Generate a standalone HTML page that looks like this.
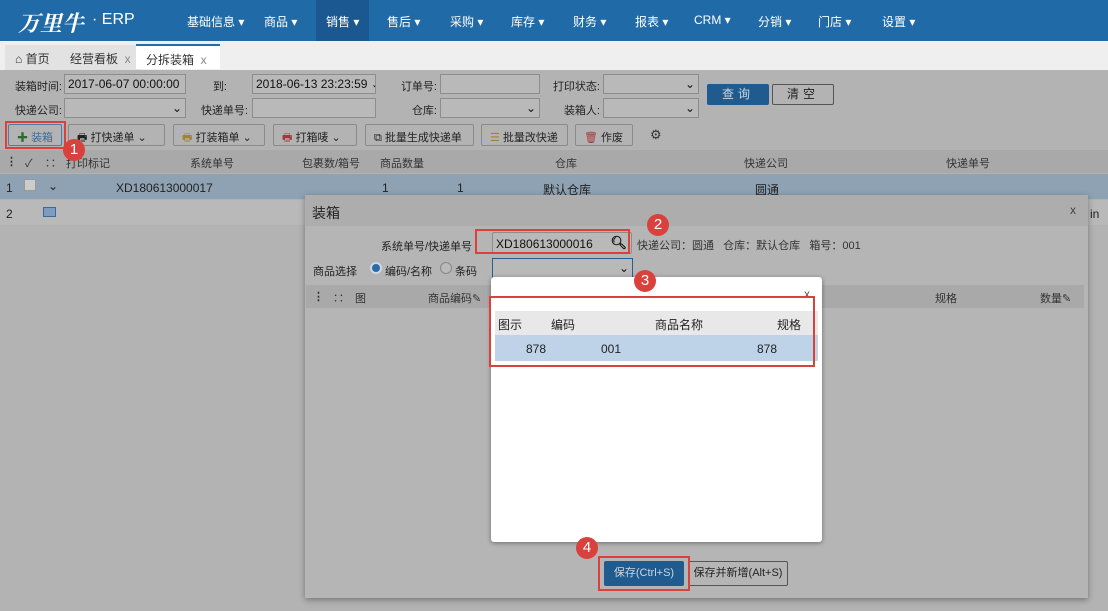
<!DOCTYPE html>
<html><head><meta charset="utf-8"><style>
*{box-sizing:border-box;margin:0;padding:0}
body{width:1108px;height:611px;overflow:hidden;position:relative;background:#b3b3b3;font-family:"Liberation Sans","Noto Sans CJK SC",sans-serif;font-size:12px;color:#222}
.a{position:absolute}
.nav{left:0;top:0;width:1108px;height:41px;background:#216aa8;color:#fff}
.nav span{position:absolute;top:13px;font-size:12px}
.tabs{left:0;top:41px;width:1108px;height:29px;background:#efefef}
.tab{top:4px;height:25px;padding:5px 10px;font-size:12px;color:#333;background:#e2e2e2}
.inp{background:#b9b9b9;border:1px solid #8d8d8d;height:20px;font-size:12px;padding:2px 3px;color:#111;white-space:nowrap;overflow:hidden}
.lbl{font-size:11px;color:#222;text-align:right;width:80px;white-space:nowrap}
.btn{top:124px;height:22px;border:1px solid #8a8a8a;border-radius:2px;font-size:11px;padding:4px 8px;color:#222;white-space:nowrap}
.hdr{top:150px;left:0;width:1108px;height:23px;background:#a9a9a9}
.th{top:155px;font-size:11px;color:#333}
.badge{width:22px;height:22px;border-radius:50%;background:#d9413d;color:#fff;font-size:15px;text-align:center;line-height:22px;z-index:5}
.red{border:2px solid #d9413d;z-index:4}
</style></head><body>
<div class="a nav">
 <div class="a" style="left:18px;top:7px;font:italic bold 22px 'Liberation Serif','Noto Serif CJK SC',serif;color:#fff">万里牛</div>
 <div class="a" style="left:92px;top:11px;font-size:16px">· ERP</div>
 <div class="a" style="left:316px;top:0;width:53px;height:41px;background:#1b5790"></div>
 <span style="left:187px">基础信息 ▾</span><span style="left:264px">商品 ▾</span><span style="left:326px">销售 ▾</span><span style="left:387px">售后 ▾</span><span style="left:450px">采购 ▾</span><span style="left:511px">库存 ▾</span><span style="left:573px">财务 ▾</span><span style="left:635px">报表 ▾</span><span style="left:694px">CRM ▾</span><span style="left:758px">分销 ▾</span><span style="left:818px">门店 ▾</span><span style="left:882px">设置 ▾</span>
</div>
<div class="a tabs"></div>
<div class="a tab" style="left:5px;top:45px">⌂ 首页</div>
<div class="a tab" style="left:60px;top:45px">经营看板 &nbsp;<span style="color:#888">x</span></div>
<div class="a tab" style="left:136px;top:44px;background:#fff;border-top:2px solid #2a6aa8;width:84px">分拆装箱 &nbsp;<span style="color:#888">x</span></div>

<div class="a lbl" style="left:-18px;top:78px">装箱时间:</div>
<div class="a inp" style="left:64px;top:74px;width:122px">2017-06-07 00:00:00 ⌄</div>
<div class="a lbl" style="left:147px;top:78px">到:</div>
<div class="a inp" style="left:252px;top:74px;width:124px">2018-06-13 23:23:59 ⌄</div>
<div class="a lbl" style="left:357px;top:78px">订单号:</div>
<div class="a inp" style="left:440px;top:74px;width:100px"></div>
<div class="a lbl" style="left:520px;top:78px">打印状态:</div>
<div class="a inp" style="left:603px;top:74px;width:96px;text-align:right">⌄</div>
<div class="a lbl" style="left:-18px;top:102px">快递公司:</div>
<div class="a inp" style="left:64px;top:98px;width:122px;text-align:right">⌄</div>
<div class="a lbl" style="left:168px;top:102px">快递单号:</div>
<div class="a inp" style="left:252px;top:98px;width:124px"></div>
<div class="a lbl" style="left:357px;top:102px">仓库:</div>
<div class="a inp" style="left:440px;top:98px;width:100px;text-align:right">⌄</div>
<div class="a lbl" style="left:520px;top:102px">装箱人:</div>
<div class="a inp" style="left:603px;top:98px;width:96px;text-align:right">⌄</div>
<div class="a" style="left:707px;top:84px;width:62px;height:21px;background:#1f5b8e;color:#c9d6e3;text-align:center;line-height:20px;border-radius:2px;letter-spacing:4px">查询</div>
<div class="a" style="left:772px;top:84px;width:62px;height:21px;border:1px solid #555;text-align:center;line-height:19px;border-radius:2px;letter-spacing:4px">清空</div>

<div class="a red" style="left:5px;top:121px;width:61px;height:28px"></div>
<div class="a btn" style="left:8px;border-color:#4d7ea8"><b style="color:#2c6a35">✚</b> <span style="color:#3d6b98">装箱</span></div>
<div class="a btn" style="left:68px;width:97px">🖶 打快递单 ⌄</div>
<div class="a btn" style="left:173px;width:92px"><span style="color:#a08431">🖶</span> 打装箱单 ⌄</div>
<div class="a btn" style="left:273px;width:84px"><span style="color:#a23a3a">🖶</span> 打箱唛 ⌄</div>
<div class="a btn" style="left:365px;width:109px">⧉ 批量生成快递单</div>
<div class="a btn" style="left:481px;width:87px"><span style="color:#a08431">☰</span> 批量改快递</div>
<div class="a btn" style="left:575px;width:58px"><span style="color:#a23a3a">🗑</span> 作废</div>
<div class="a" style="left:650px;top:127px;font-size:13px;color:#333">⚙</div>
<div class="a badge" style="left:63px;top:139px">1</div>

<div class="a hdr"></div>
<div class="a th" style="left:6px"><b>⋮</b></div><div class="a th" style="left:25px">✓</div><div class="a th" style="left:45px">∷</div>
<div class="a th" style="left:66px">打印标记</div><div class="a th" style="left:190px">系统单号</div><div class="a th" style="left:302px">包裹数/箱号</div><div class="a th" style="left:380px">商品数量</div><div class="a th" style="left:555px">仓库</div><div class="a th" style="left:744px">快递公司</div><div class="a th" style="left:946px">快递单号</div>
<div class="a" style="left:0;top:174px;width:1108px;height:25px;background:#8ea2b3"></div>
<div class="a" style="left:6px;top:181px">1</div><div class="a" style="left:24px;top:179px;width:12px;height:12px;background:#ccc;border:1px solid #999"></div><div class="a" style="left:48px;top:179px">⌄</div>
<div class="a" style="left:116px;top:181px">XD180613000017</div><div class="a" style="left:382px;top:181px">1</div><div class="a" style="left:457px;top:181px">1</div><div class="a" style="left:543px;top:181px">默认仓库</div><div class="a" style="left:755px;top:181px">圆通</div>
<div class="a" style="left:0;top:200px;width:1108px;height:25px;background:#b9b9b9"></div>
<div class="a" style="left:6px;top:207px">2</div><div class="a" style="left:43px;top:207px;width:13px;height:10px;border:1px solid #3a6a9a;background:#7d9cc0"></div>
<div class="a" style="left:1090px;top:207px">in</div>

<div class="a" style="left:305px;top:195px;width:783px;height:403px;background:#b5b5b5;box-shadow:0 2px 6px rgba(0,0,0,.35)"></div>
<div class="a" style="left:305px;top:195px;width:783px;height:31px;background:#adadad"></div>
<div class="a" style="left:312px;top:203px;font-size:14px">装箱</div>
<div class="a" style="left:1070px;top:203px;color:#444">x</div>
<div class="a" style="left:381px;top:238px;font-size:11px">系统单号/快递单号</div>
<div class="a inp" style="left:492px;top:232px;width:140px;height:22px;padding-top:4px;border-radius:2px">XD180613000016<b style="position:absolute;right:4px;top:2px;font-size:13px">🔍︎</b></div>
<div class="a red" style="left:475px;top:229px;width:155px;height:25px"></div>
<div class="a badge" style="left:647px;top:214px">2</div>
<div class="a" style="left:637px;top:237px;color:#333;font-size:11px">快递公司：圆通 &nbsp; 仓库：默认仓库 &nbsp; 箱号：001</div>
<div class="a" style="left:313px;top:263px;font-size:11px">商品选择</div>
<div class="a" style="left:370px;top:262px;width:12px;height:12px;border-radius:50%;background:#2a6aa8;border:2px solid #cfd8e0"></div>
<div class="a" style="left:385px;top:263px;font-size:11px">编码/名称</div>
<div class="a" style="left:440px;top:262px;width:12px;height:12px;border-radius:50%;border:1px solid #888;background:#bbb"></div>
<div class="a" style="left:455px;top:263px;font-size:11px">条码</div>
<div class="a inp" style="left:492px;top:258px;width:141px;height:21px;border-color:#2a5e90;text-align:right">⌄</div>
<div class="a" style="left:306px;top:285px;width:778px;height:23px;background:#a9a9a9"></div>
<div class="a th" style="left:313px;top:290px"><b>⋮</b></div><div class="a th" style="left:333px;top:290px">∷</div><div class="a th" style="left:355px;top:290px">图</div><div class="a th" style="left:428px;top:290px">商品编码✎</div><div class="a th" style="left:935px;top:290px">规格</div><div class="a th" style="left:1040px;top:290px">数量✎</div>

<div class="a" style="left:491px;top:277px;width:331px;height:265px;background:#fff;border-radius:3px;box-shadow:0 1px 5px rgba(0,0,0,.4)"></div>
<div class="a" style="left:804px;top:287px;color:#555">x</div>
<div class="a" style="left:495px;top:311px;width:323px;height:24px;background:#e8e8e8"></div>
<div class="a" style="left:498px;top:316px">图示</div><div class="a" style="left:551px;top:316px">编码</div><div class="a" style="left:655px;top:316px">商品名称</div><div class="a" style="left:777px;top:316px">规格</div>
<div class="a" style="left:495px;top:335px;width:323px;height:26px;background:#bed3e7"></div>
<div class="a" style="left:526px;top:342px">878</div><div class="a" style="left:601px;top:342px">001</div><div class="a" style="left:757px;top:342px">878</div>
<div class="a red" style="left:489px;top:296px;width:326px;height:71px"></div>
<div class="a badge" style="left:634px;top:270px">3</div>

<div class="a" style="left:604px;top:561px;width:80px;height:25px;background:#1f5b8e;color:#c9d6e3;text-align:center;line-height:25px;border-radius:2px;font-size:11px">保存(Ctrl+S)</div>
<div class="a" style="left:688px;top:561px;width:100px;height:25px;border:1px solid #555;text-align:center;line-height:23px;border-radius:2px;font-size:11px">保存并新增(Alt+S)</div>
<div class="a red" style="left:598px;top:556px;width:92px;height:35px"></div>
<div class="a badge" style="left:576px;top:537px">4</div>
</body></html>
